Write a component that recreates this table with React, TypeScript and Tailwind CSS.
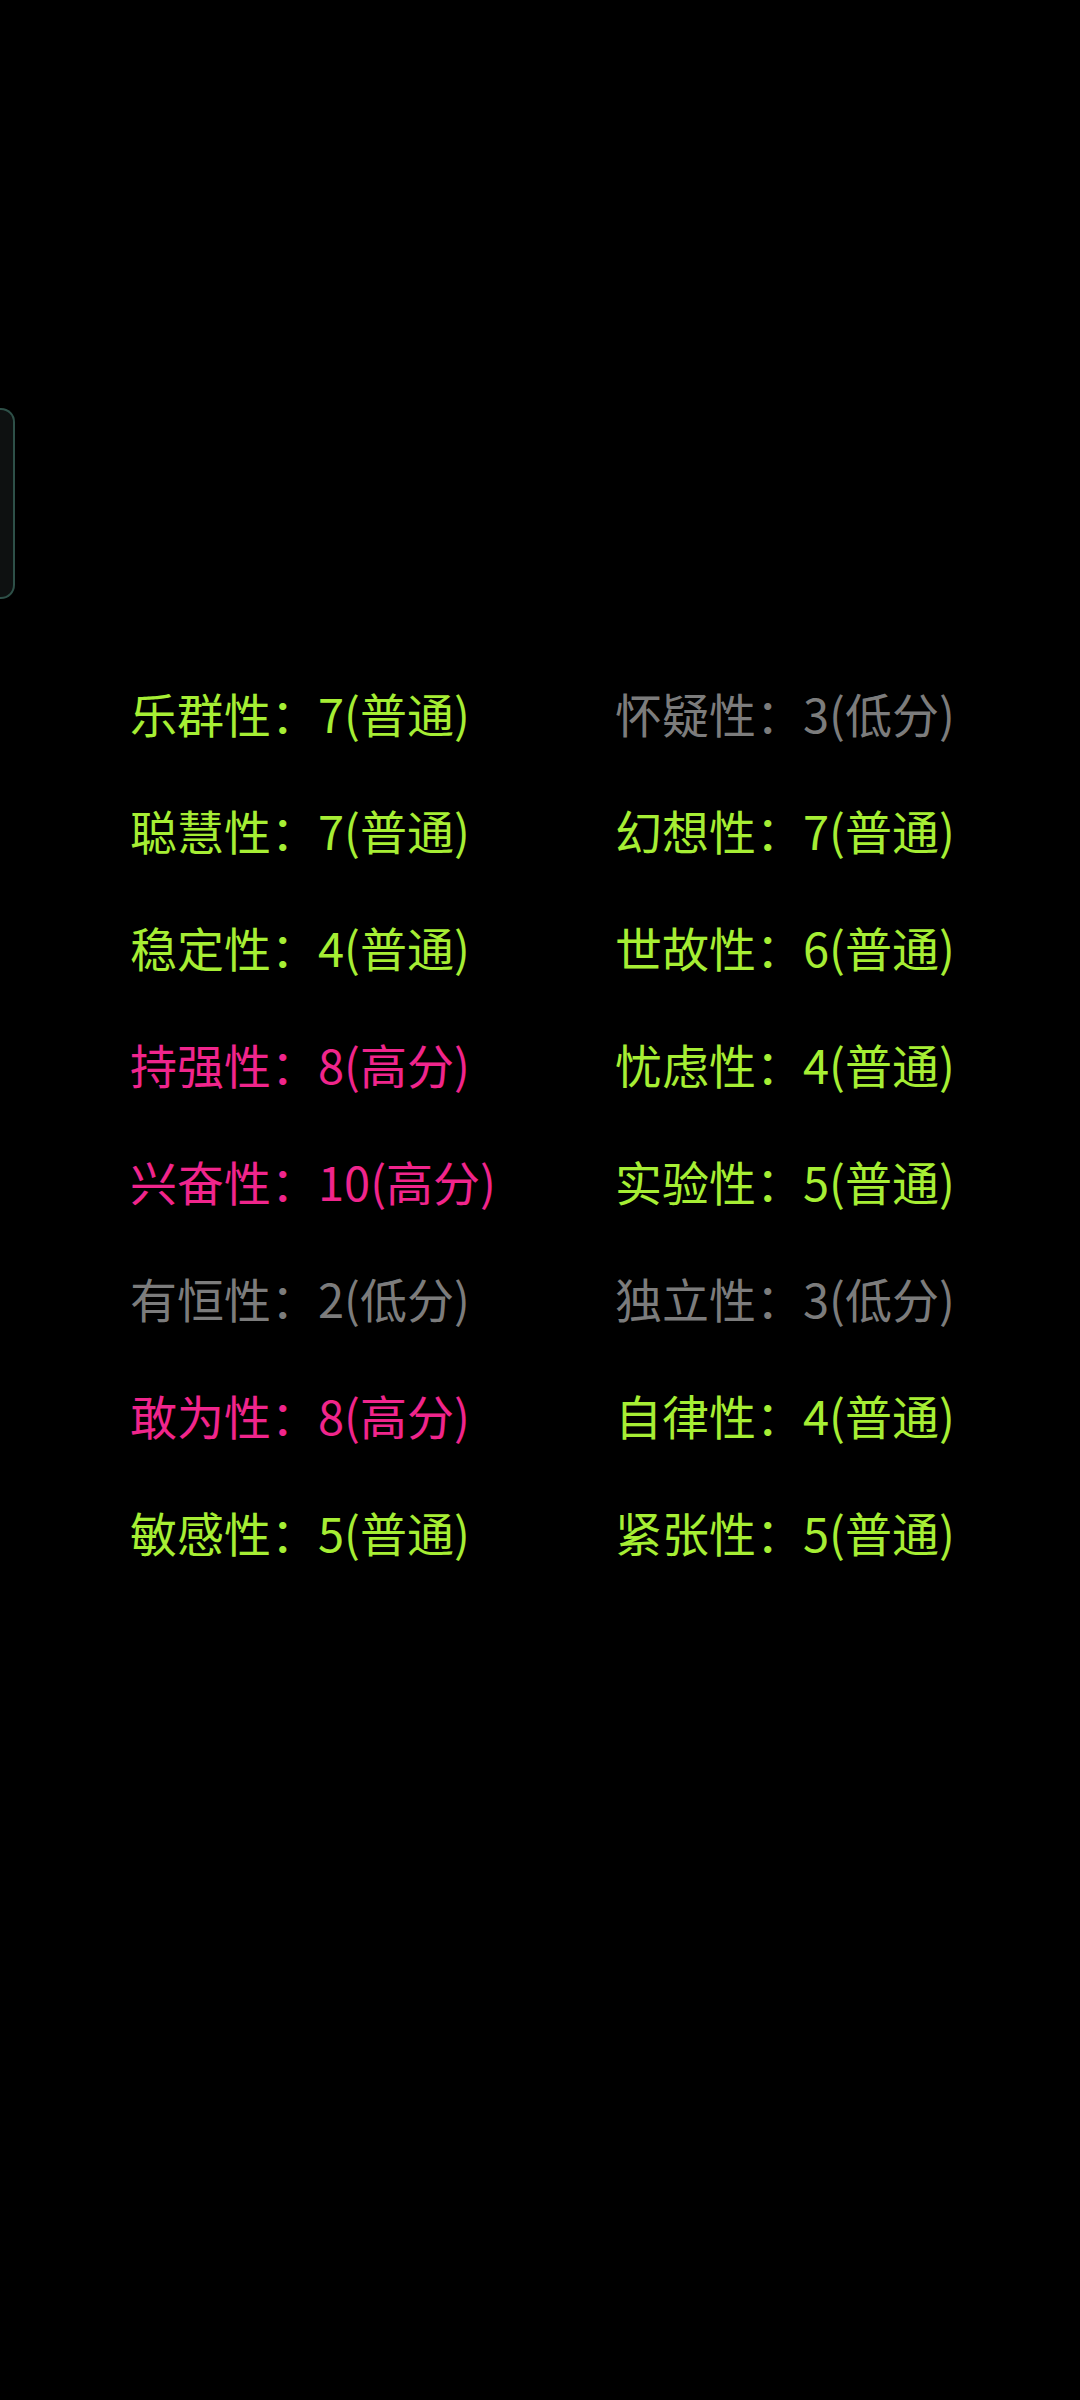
const GREEN = "text-[#a6ee34]";
const PINK = "text-[#f0258c]";
const GRAY = "text-[#7c7c7c]";

type Trait = { name: string; score: number; level: string; color: string };

const TRAITS: Trait[] = [
  { name: "乐群性", score: 7, level: "普通", color: GREEN },
  { name: "怀疑性", score: 3, level: "低分", color: GRAY },
  { name: "聪慧性", score: 7, level: "普通", color: GREEN },
  { name: "幻想性", score: 7, level: "普通", color: GREEN },
  { name: "稳定性", score: 4, level: "普通", color: GREEN },
  { name: "世故性", score: 6, level: "普通", color: GREEN },
  { name: "持强性", score: 8, level: "高分", color: PINK },
  { name: "忧虑性", score: 4, level: "普通", color: GREEN },
  { name: "兴奋性", score: 10, level: "高分", color: PINK },
  { name: "实验性", score: 5, level: "普通", color: GREEN },
  { name: "有恒性", score: 2, level: "低分", color: GRAY },
  { name: "独立性", score: 3, level: "低分", color: GRAY },
  { name: "敢为性", score: 8, level: "高分", color: PINK },
  { name: "自律性", score: 4, level: "普通", color: GREEN },
  { name: "敏感性", score: 5, level: "普通", color: GREEN },
  { name: "紧张性", score: 5, level: "普通", color: GREEN },
];

export default function App() {
  return (
    <div className="min-h-[2400px] w-[1080px] bg-black font-['Noto_Sans_CJK_SC',sans-serif]">
      {/* side handle */}
      <div className="h-[408px]" />
      <div className="h-[191px] w-[15px] rounded-r-[14px] border-2 border-l-0 border-[#2e5048] bg-[#0e1111]" />

      <div className="mt-[55px] grid grid-cols-[485px_auto] pl-[130px]">
        {TRAITS.map((t) => (
          <div key={t.name} className={`h-[117px] text-[47px] leading-[117px] whitespace-nowrap ${t.color}`}>
            {t.name}：{t.score}({t.level})
          </div>
        ))}
      </div>
    </div>
  );
}
